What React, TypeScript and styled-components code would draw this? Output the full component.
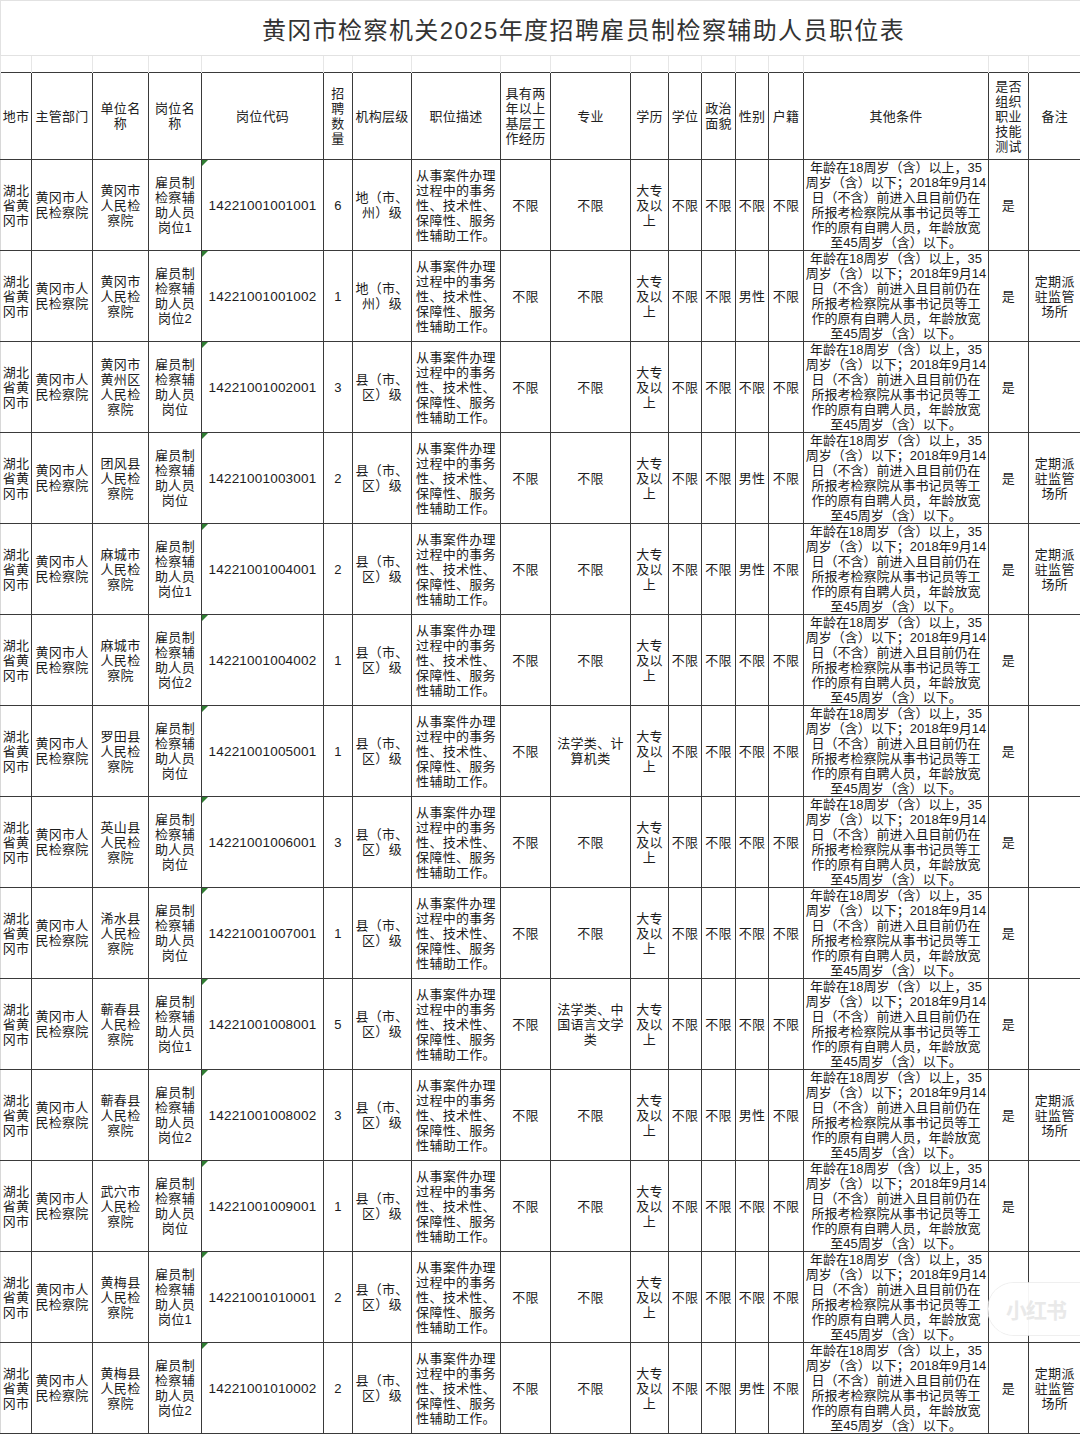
import React from "react"
import styled, { createGlobalStyle } from "styled-components"

const GlobalStyle = createGlobalStyle`
  html, body {
    margin: 0;
    padding: 0;
    background: #fff;
  }
  body {
    width: 1080px;
    height: 1436px;
    overflow: hidden;
    font-family: "Liberation Sans", "Noto Sans CJK SC", sans-serif;
    color: #1c1c1c;
  }
`

const Sheet = styled.div`
  position: relative;
  width: 1080px;
  height: 1436px;
  overflow: hidden;
  background: #fff;
`

const TitleBar = styled.div`
  height: 54px;
  border-top: 1px solid #e2e2e2;
  border-left: 1px solid #e2e2e2;
  border-bottom: 1px solid #e2e2e2;
  display: flex;
  align-items: center;
  justify-content: center;
  padding-left: 86px;
  font-size: 24px;
  letter-spacing: 1.4px;
  color: #333;
  font-weight: 400;
`

const Table = styled.table`
  border-collapse: collapse;
  table-layout: fixed;
  width: 1080px;
`

const GapCell = styled.td`
  height: 16px;
  padding: 0;
  border-left: 1px solid #e6e6e6;
  border-right: 1px solid #e6e6e6;
  border-top: none;
  border-bottom: none;
`

const HeadRow = styled.tr`
  height: 87px;
`

const DataRow = styled.tr`
  height: 91px;
`

const Cell = styled.td<{ $wide?: boolean }>`
  padding: 0;
  border: 1px solid #3a3a3a;
  text-align: center;
  vertical-align: middle;
  white-space: pre;
  font-size: 13px;
  line-height: 15px;
  letter-spacing: ${(p) => (p.$wide ? "0" : "0.3px")};
  overflow: visible;
  &:first-child {
    border-left: 1px solid #d8d8d8;
  }
  &:last-child {
    border-right: none;
  }
`

const HeadCell = styled(Cell).attrs({ as: "th" })`
  font-weight: 400;
  color: #222;
`

const CodeCell = styled(Cell)`
  position: relative;
  font-size: 13.5px;
  letter-spacing: 0.2px;
  &::before {
    content: "";
    position: absolute;
    top: 0;
    left: 0;
    border-top: 6px solid #2f7d32;
    border-right: 6px solid transparent;
  }
`

// faint app watermark lying over the bottom-right corner of the sheet
const Watermark = styled.div`
  position: absolute;
  left: 988px;
  top: 1283px;
  width: 120px;
  height: 52px;
  border-radius: 26px;
  background: rgba(255, 255, 255, 0.95);
  box-shadow: 0 0 0 1px rgba(235, 235, 235, 0.8);
  display: flex;
  align-items: center;
  padding-left: 18px;
  box-sizing: border-box;
  font-size: 21px;
  font-weight: 700;
  color: #e9e9e9;
  letter-spacing: -1px;
`

const widths = [31, 61, 56, 53, 122, 29, 59, 89, 50, 80, 38, 33, 34, 33, 35, 185, 40, 52]

const headers = [
  "地市",
  "主管部门",
  "单位名\n称",
  "岗位名\n称",
  "岗位代码",
  "招\n聘\n数\n量",
  "机构层级",
  "职位描述",
  "具有两\n年以上\n基层工\n作经历",
  "专业",
  "学历",
  "学位",
  "政治\n面貌",
  "性别",
  "户籍",
  "其他条件",
  "是否\n组织\n职业\n技能\n测试",
  "备注",
]

const desc = "从事案件办理\n过程中的事务\n性、技术性、\n保障性、服务\n性辅助工作。"
const cond =
  "年龄在18周岁（含）以上，35\n周岁（含）以下；2018年9月14\n日（不含）前进入且目前仍在\n所报考检察院从事书记员等工\n作的原有自聘人员，年龄放宽\n至45周岁（含）以下。"
const remark = "定期派\n驻监管\n场所"
const city = "地（市、\n州）级"
const county = "县（市、\n区）级"

type Post = {
  unit: string
  post: string
  code: string
  count: string
  level: string
  major?: string
  gender?: string
  test?: string
  note?: string
}

const court = (name: string) => `${name}\n人民检\n察院`
const job = (n: string) => `雇员制\n检察辅\n助人员\n岗位${n}`

const posts: Post[] = [
  { unit: court("黄冈市"), post: job("1"), code: "14221001001001", count: "6", level: city },
  { unit: court("黄冈市"), post: job("2"), code: "14221001001002", count: "1", level: city, gender: "男性", note: remark },
  { unit: "黄冈市\n黄州区\n人民检\n察院", post: job(""), code: "14221001002001", count: "3", level: county },
  { unit: court("团风县"), post: job(""), code: "14221001003001", count: "2", level: county, gender: "男性", note: remark },
  { unit: court("麻城市"), post: job("1"), code: "14221001004001", count: "2", level: county, gender: "男性", note: remark },
  { unit: court("麻城市"), post: job("2"), code: "14221001004002", count: "1", level: county },
  { unit: court("罗田县"), post: job(""), code: "14221001005001", count: "1", level: county, major: "法学类、计\n算机类" },
  { unit: court("英山县"), post: job(""), code: "14221001006001", count: "3", level: county },
  { unit: court("浠水县"), post: job(""), code: "14221001007001", count: "1", level: county },
  { unit: court("蕲春县"), post: job("1"), code: "14221001008001", count: "5", level: county, major: "法学类、中\n国语言文学\n类" },
  { unit: court("蕲春县"), post: job("2"), code: "14221001008002", count: "3", level: county, gender: "男性", note: remark },
  { unit: court("武穴市"), post: job(""), code: "14221001009001", count: "1", level: county },
  { unit: court("黄梅县"), post: job("1"), code: "14221001010001", count: "2", level: county, test: "" },
  { unit: court("黄梅县"), post: job("2"), code: "14221001010002", count: "2", level: county, gender: "男性", note: remark },
]

const App: React.FC = () => {
  return (
    <Sheet>
      <GlobalStyle />
      <TitleBar>黄冈市检察机关2025年度招聘雇员制检察辅助人员职位表</TitleBar>
      <Table>
        <colgroup>
          {widths.map((w, i) => (
            <col key={i} style={{ width: w }} />
          ))}
        </colgroup>
        <tbody>
          <tr>
            {widths.map((_, i) => (
              <GapCell key={i} />
            ))}
          </tr>
          <HeadRow>
            {headers.map((h) => (
              <HeadCell key={h}>{h}</HeadCell>
            ))}
          </HeadRow>
          {posts.map((p) => (
            <DataRow key={p.code}>
              <Cell>{"湖北\n省黄\n冈市"}</Cell>
              <Cell>{"黄冈市人\n民检察院"}</Cell>
              <Cell>{p.unit}</Cell>
              <Cell>{p.post}</Cell>
              <CodeCell>{p.code}</CodeCell>
              <Cell>{p.count}</Cell>
              <Cell>{p.level}</Cell>
              <Cell>{desc}</Cell>
              <Cell>不限</Cell>
              <Cell>{p.major ?? "不限"}</Cell>
              <Cell>{"大专\n及以\n上"}</Cell>
              <Cell>不限</Cell>
              <Cell>不限</Cell>
              <Cell>{p.gender ?? "不限"}</Cell>
              <Cell>不限</Cell>
              <Cell $wide>{cond}</Cell>
              <Cell>{p.test ?? "是"}</Cell>
              <Cell>{p.note ?? ""}</Cell>
            </DataRow>
          ))}
        </tbody>
      </Table>
      <Watermark>小红书</Watermark>
    </Sheet>
  )
}

export default App
